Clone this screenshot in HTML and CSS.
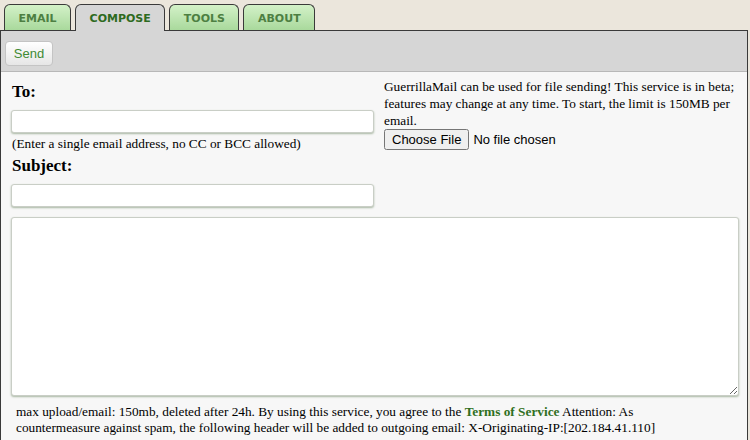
FILE: index.html
```html
<!DOCTYPE html>
<html lang="en">
<head>
  <meta charset="UTF-8">
  <title>Compose</title>
  <link rel="stylesheet" href="styles.css">
</head>
<body>
  <ul class="tabs">
    <li class="tab">Email</li>
    <li class="tab active">Compose</li>
    <li class="tab">Tools</li>
    <li class="tab">About</li>
  </ul>
  <div class="panel">
    <div class="toolbar">
      <button class="send">Send</button>
    </div>
    <div class="content">
      <div class="fields">
        <div class="left">
          <h3 class="label">To:</h3>
          <input type="text" class="field">
          <p class="hint">(Enter a single email address, no CC or BCC allowed)</p>
          <h3 class="label subject">Subject:</h3>
          <input type="text" class="field">
        </div>
        <div class="right">
          <p class="note">GuerrillaMail can be used for file sending! This service is in beta; features may change at any time. To start, the limit is 150MB per email.</p>
          <input type="file" class="file">
        </div>
      </div>
      <textarea class="body"></textarea>
      <p class="footer">max upload/email: 150mb, deleted after 24h. By using this service, you agree to the <a href="#" class="tos">Terms of Service</a> Attention: As countermeasure against spam, the following header will be added to outgoing email: X-Originating-IP:[202.184.41.110]</p>
    </div>
  </div>
</body>
</html>
```

FILE: styles.css
```css
body{
  margin: 0;
  padding: 0;
  background: #ebe6dc;
  font-family: "Liberation Serif", serif;
}
.tabs{
  display: flex;
  gap: 4px;
  margin: 0;
  padding: 4px 0 0 4px;
  list-style: none;
  height: 26px;
}
.tab{
  box-sizing: border-box;
  height: 26px;
  padding: 0 13.5px;
  border: 1px solid #3a3a3a;
  border-bottom: none;
  border-radius: 6px 6px 0 0;
  background: linear-gradient(#d3f1c8, #a9d99c);
  font-family: "DejaVu Sans", sans-serif;
  font-size: 11px;
  font-weight: bold;
  text-transform: uppercase;
  line-height: 27px;
  color: #4d7f42;
}
.tab.active{
  height: 27px;
  position: relative;
  z-index: 1;
  padding: 0 13.5px;
  background: #d6d6d6;
  color: #2d6a20;
}
.panel{
  margin-right: 2px;
  border: 1px solid #3a3a3a;
  border-bottom: none;
}
.toolbar{
  height: 41px;
  box-sizing: border-box;
  padding: 10px 4px 0;
  background: #d6d6d6;
  border-bottom: 1px solid #b8b8b8;
}
.send{
  width: 48px;
  height: 25px;
  padding: 0;
  border: 1px solid #c4c4c4;
  border-radius: 4px;
  background: linear-gradient(#ffffff, #e6e6e6);
  font-family: "Liberation Sans", sans-serif;
  font-size: 13px;
  color: #3f8a33;
}
.content{
  background: #f7f7f7;
  padding: 1px 9px 12px 10px;
  height: 400px;
}
.fields{
  display: grid;
  grid-template-columns: 363px 1fr;
  gap: 10px;
}
.label{
  margin: 9px 0 8px 1px;
  font-size: 17px;
  line-height: 20px;
}
.label.subject{
  margin-top: 4px;
}
.field{
  display: block;
  box-sizing: border-box;
  width: 363px;
  height: 23px;
  border: 1px solid #c9cec6;
  border-radius: 3px;
  background: #fff;
  box-shadow: 0 1px 2px #a9b8a3;
  outline: none;
}
.hint{
  margin: 3px 0 0 1px;
  font-size: 13.3px;
  line-height: 16px;
}
.note{
  margin: 5px 0 0;
  font-size: 13.3px;
  line-height: 17px;
}
.file{
  font-family: "Liberation Sans", sans-serif;
  font-size: 13px;
}
.body{
  display: block;
  box-sizing: border-box;
  width: 728px;
  height: 179px;
  margin-top: 10px;
  border: 1px solid #c9cec6;
  border-radius: 3px;
  background: #fff;
  box-shadow: 0 1px 2px #a9b8a3;
  resize: both;
}
.footer{
  max-width: 665px;
  margin: 8px 0 0 5px;
  font-size: 13.3px;
  line-height: 16px;
}
.tos{
  color: #2f6f22;
  font-weight: bold;
  text-decoration: none;
}
```
